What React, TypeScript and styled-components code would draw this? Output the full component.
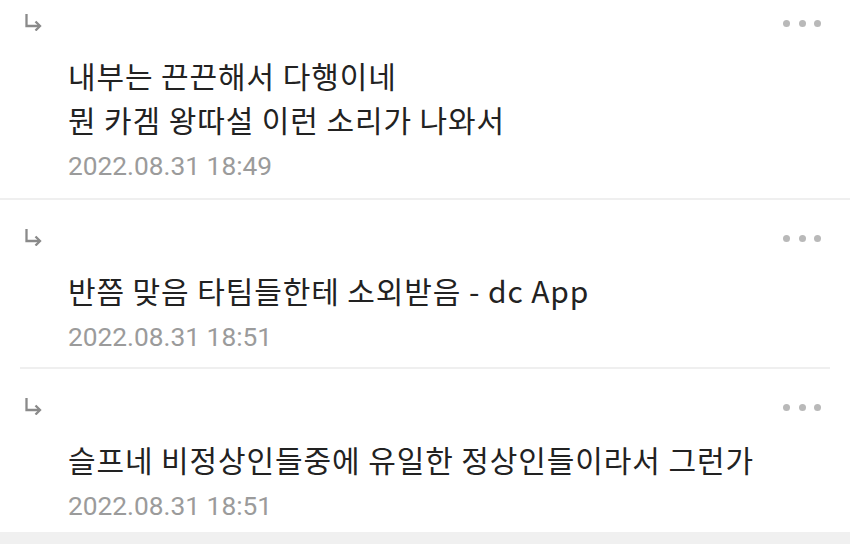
import styled, { createGlobalStyle } from 'styled-components';

const Global = createGlobalStyle`
    html, body {
        margin: 0;
        padding: 0;
        background: #ffffff;
        overflow: hidden;
    }
    body {
        font-family: Roboto, "Noto Sans CJK KR", "Noto Sans", sans-serif;
    }
`

const Page = styled.div`
    width: 850px;
    height: 544px;
    display: flex;
    flex-direction: column;
    overflow: hidden;
    background: #ffffff;
`

const List = styled.div`
    display: flex;
    flex-direction: column;
    margin-top: -15px;
`

const Item = styled.div<{ $line?: 'full' | 'inset' | 'none' }>`
    display: grid;
    grid-template-columns: 46px 1fr auto;
    padding: 24px 29px ${p => p.$line === 'none' ? '9px' : '15px'} 24px;
    border-bottom: ${p => p.$line === 'full' ? '2px solid #efefef' : 'none'};
    position: relative;

    ${p => p.$line === 'inset' && `
        &::after {
            content: '';
            position: absolute;
            left: 20px;
            right: 20px;
            bottom: 0;
            height: 2px;
            background: #efefef;
        }
    `}
`

const Arrow = styled.div`
    height: 28px;
    display: flex;
    align-items: center;
    color: #8a8a8a;
    margin-top: -1px;
`

const Name = styled.div`
    height: 28px;
`

const More = styled.div`
    height: 28px;
    display: flex;
    align-items: center;
    gap: 8.5px;

    span {
        width: 7px;
        height: 7px;
        border-radius: 50%;
        background: #b9b9b9;
    }
`

const Body = styled.div`
    grid-column: 2 / 4;
    margin-top: 16px;
    margin-left: -2px;
    font-family: "Noto Sans CJK KR", Roboto, sans-serif;
    font-size: 30px;
    line-height: 44px;
    color: #222222;
    letter-spacing: 0.9px;
`

const Date = styled.div`
    grid-column: 2 / 4;
    margin-top: 8px;
    margin-left: -2px;
    font-family: Roboto, sans-serif;
    font-size: 26.3px;
    line-height: 34px;
    color: #9b9b9b;
`

const Footer = styled.div`
    flex: 1;
    background: #f0f0f0;
`

const ReplyIcon = () => (
    <svg width="18" height="18" viewBox="0 0 18 18" fill="none" stroke="currentColor" strokeWidth="2.3">
        <path d="M2.5 1 V13 H16" />
        <path d="M11.5 8.5 L16 13 L11.5 17.5" />
    </svg>
)

const datas = [
    { id: 1, lines: ['내부는 끈끈해서 다행이네', '뭔 카겜 왕따설 이런 소리가 나와서'], date: '2022.08.31 18:49', line: 'full' as const },
    { id: 2, lines: ['반쯤 맞음 타팀들한테 소외받음 - dc App'], date: '2022.08.31 18:51', line: 'inset' as const },
    { id: 3, lines: ['슬프네 비정상인들중에 유일한 정상인들이라서 그런가'], date: '2022.08.31 18:51', line: 'none' as const },
]

const App = () => {
    return (
        <Page>
            <Global />
            <List>
                {datas.map((d) =>
                    <Item key={d.id} $line={d.line}>
                        <Arrow><ReplyIcon /></Arrow>
                        <Name />
                        <More><span /><span /><span /></More>
                        <Body>
                            {d.lines.map((l) => <div key={l}>{l}</div>)}
                        </Body>
                        <Date>{d.date}</Date>
                    </Item>
                )}
            </List>
            <Footer />
        </Page>
    )
}

export default App
